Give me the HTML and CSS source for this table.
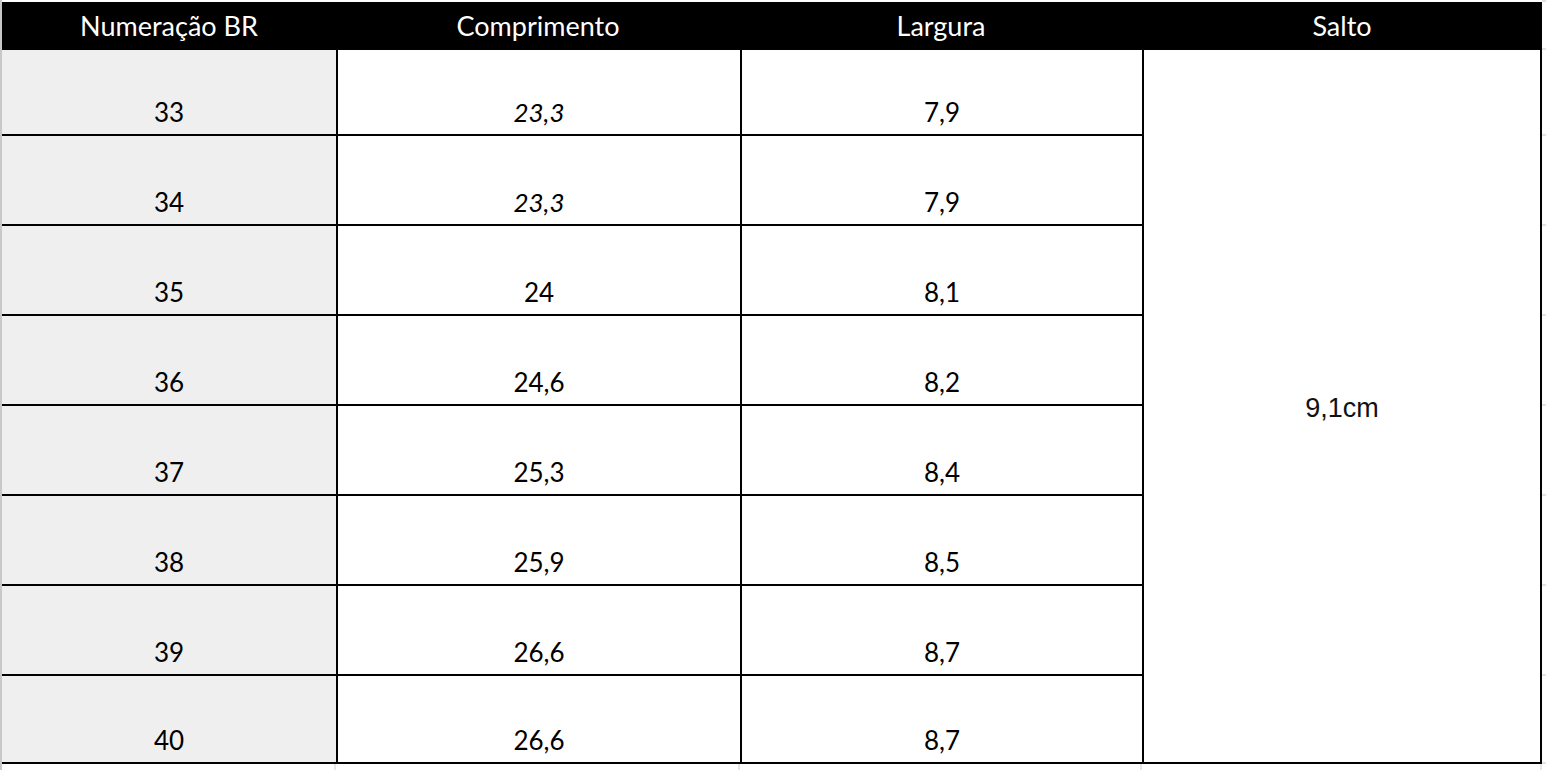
FILE: index.html
```html
<!DOCTYPE html>
<html lang="pt-BR">
<head>
<meta charset="utf-8">
<title>Tabela de medidas</title>
<link rel="stylesheet" href="styles.css">
</head>
<body>
<div class="sheet">
  <div class="grid">
    <div class="hd">Numeração BR</div>
    <div class="hd">Comprimento</div>
    <div class="hd">Largura</div>
    <div class="hd">Salto</div>
    <div class="ghost-r hdr"></div>

    <div class="salto">9,1cm</div>

    <div class="c num">33</div><div class="c mid"><i>23,3</i></div><div class="c mid">7,9</div><div class="ghost-r"></div>
    <div class="c num">34</div><div class="c mid"><i>23,3</i></div><div class="c mid">7,9</div><div class="ghost-r"></div>
    <div class="c num">35</div><div class="c mid">24</div><div class="c mid">8,1</div><div class="ghost-r"></div>
    <div class="c num">36</div><div class="c mid">24,6</div><div class="c mid">8,2</div><div class="ghost-r"></div>
    <div class="c num">37</div><div class="c mid">25,3</div><div class="c mid">8,4</div><div class="ghost-r"></div>
    <div class="c num">38</div><div class="c mid">25,9</div><div class="c mid">8,5</div><div class="ghost-r"></div>
    <div class="c num">39</div><div class="c mid">26,6</div><div class="c mid">8,7</div><div class="ghost-r"></div>
    <div class="c num">40</div><div class="c mid">26,6</div><div class="c mid">8,7</div><div class="ghost-r"></div>

    <div class="ghost-b first"></div><div class="ghost-b"></div><div class="ghost-b"></div><div class="ghost-b last"></div><div class="ghost-b none"></div>
  </div>
</div>
</body>
</html>
```
FILE: styles.css
```css
html, body {
  margin: 0;
  padding: 0;
  background: #ffffff;
}

.sheet {
  height: 770px;
  overflow: hidden;
  box-sizing: border-box;
  border-left: 2px solid #c8c8c8;
  padding-top: 2px;
}

.grid {
  display: grid;
  grid-template-columns: 334px 404px 402px 400px 4px;
  grid-template-rows: 48px 86px 90px 90px 90px 90px 90px 90px 88px 6px;
  font-family: Lato, "Liberation Sans", sans-serif;
  color: #000;
}

.hd {
  background: #000;
  color: #fff;
  font-size: 27px;
  line-height: 48px;
  text-align: center;
}

.c {
  display: flex;
  align-items: flex-end;
  justify-content: center;
  font-size: 26px;
  line-height: 26px;
  padding-bottom: 9px;
  border-bottom: 2px solid #000;
  box-sizing: border-box;
}

.c i {
  font-style: italic;
}

.num {
  background: #efefef;
}

.mid {
  border-left: 2px solid #000;
  background: #fff;
}

.salto {
  grid-column: 4;
  grid-row: 2 / span 8;
  border-left: 2px solid #000;
  border-right: 2px solid #000;
  border-bottom: 2px solid #000;
  box-sizing: border-box;
  display: flex;
  align-items: center;
  justify-content: center;
  padding-top: 4px;
  font-family: "Liberation Sans", Arial, sans-serif;
  font-size: 27px;
  color: #111;
}

.ghost-r {
  box-sizing: border-box;
  border-bottom: 2px solid #e2e2e2;
}

.ghost-r.hdr {
  border-top: 2px solid #e2e2e2;
  margin-top: -2px;
}

.ghost-b {
  box-sizing: border-box;
  border-right: 2px solid #e6e6e6;
}

.ghost-b.none {
  border-right: none;
}
```
